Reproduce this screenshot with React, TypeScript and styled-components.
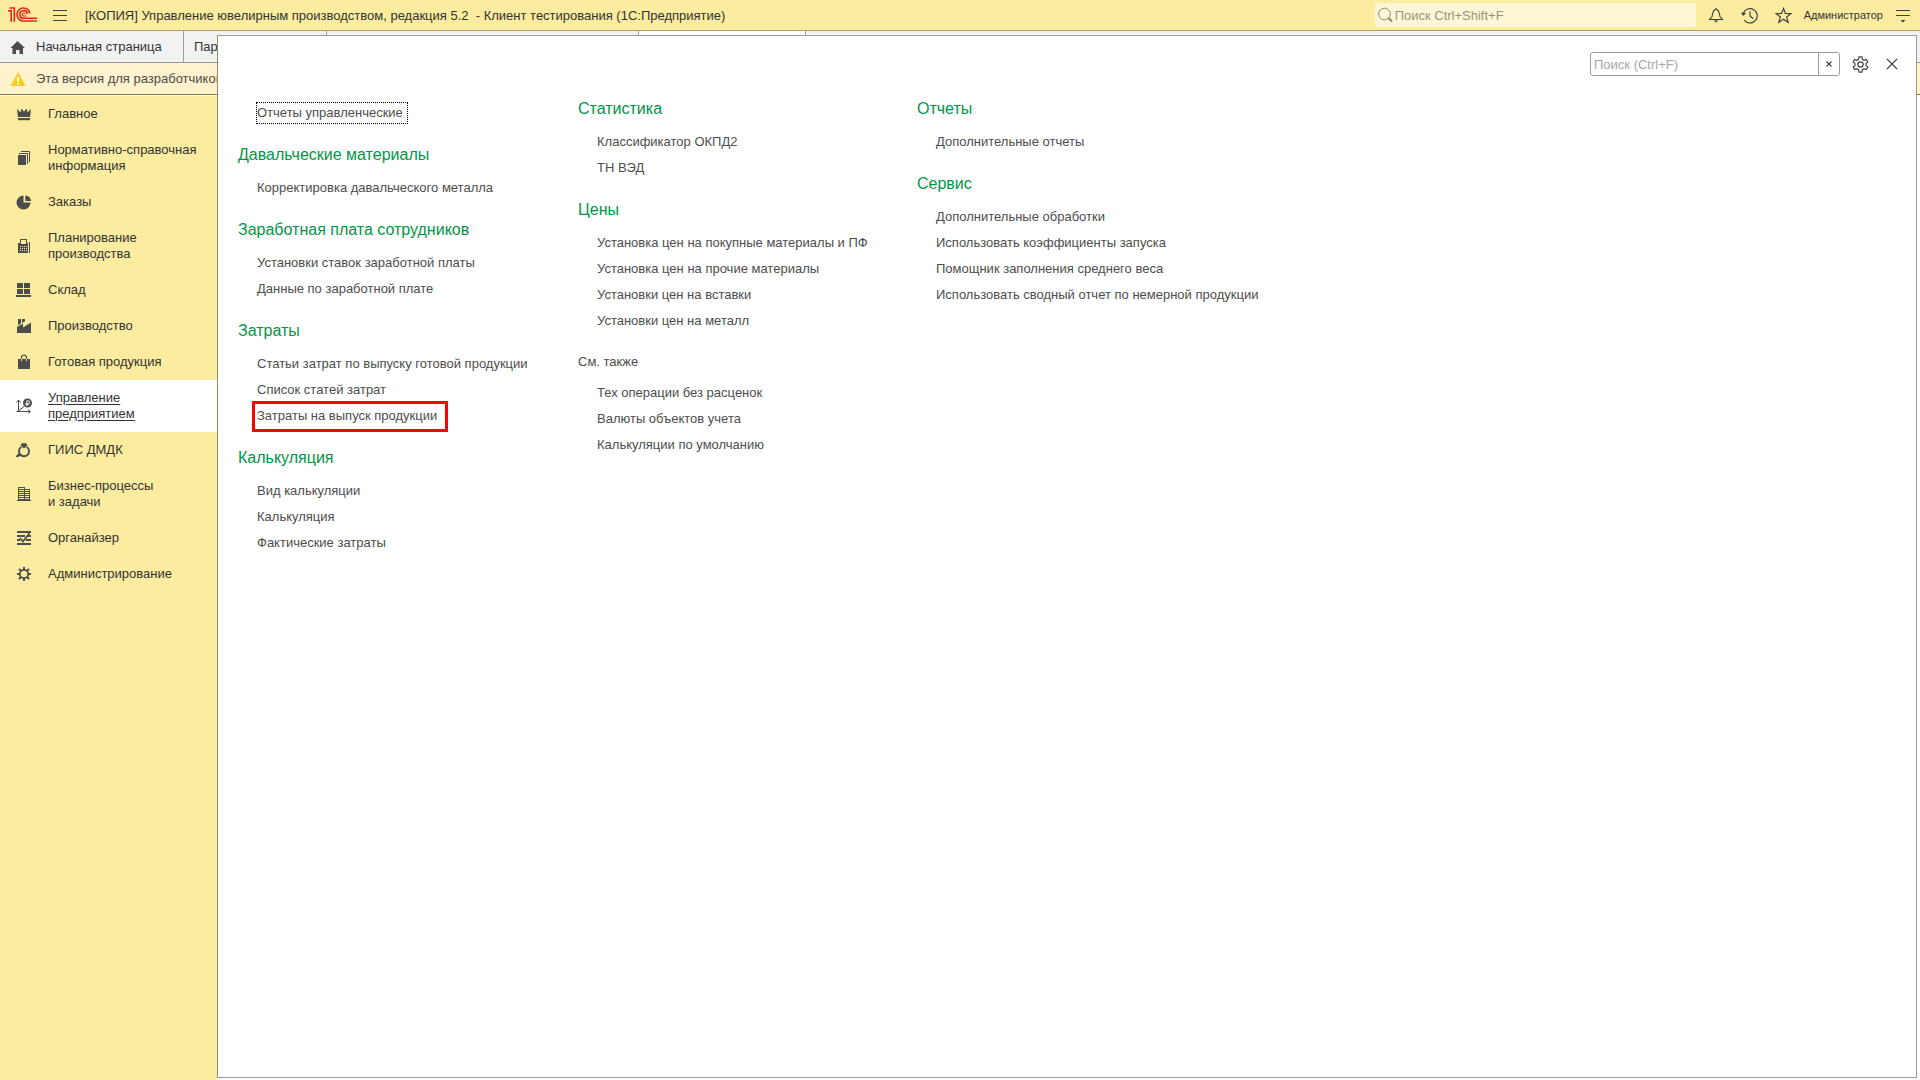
import React from "react";
import styled, { createGlobalStyle, css } from "styled-components";

const color = {
  brand: "#fbec9f",
  brandSoft: "#fdf7d8",
  notice: "#fff2cc",
  noticeLine: "#94792a",
  bar: "#f2f2f2",
  line: "#9b9b9b",
  brandLine: "#a8a16c",
  text: "#333333",
  link: "#4d4d4d",
  green: "#009646",
  mark: "#ff0000",
};

const Global = createGlobalStyle`
  *, *::before, *::after { box-sizing: border-box; }
  body { margin: 0; background: #fff; }
  body, button, input { font-family: "Liberation Sans", Arial, sans-serif; font-size: 13px; color: ${color.text}; }
  button { border: 0; background: none; padding: 0; cursor: pointer; }
  ul, h1, h2 { margin: 0; padding: 0; list-style: none; font-weight: 400; }
  a { color: inherit; text-decoration: none; }
  svg { display: block; flex: none; }
`;

const Page = styled.div`
  display: flex;
  flex-direction: column;
  height: 100vh;
  overflow: hidden;
`;

/* ---------- Title bar ---------- */

const TitleBar = styled.header`
  display: flex;
  align-items: center;
  flex: none;
  height: 31px;
  padding-left: 8px;
  background: ${color.brand};
  border-bottom: 1px solid ${color.brandLine};
`;

const MenuButton = styled.button`
  display: grid;
  place-items: center;
  width: 30px;
  height: 30px;
  margin: 0 10px 0 7px;
`;

const AppTitle = styled.h1`
  flex: 1;
  padding-top: 1px;
  font-size: 13px;
  line-height: 16px;
  white-space: pre;
`;

const GlobalSearch = styled.label`
  display: flex;
  align-items: center;
  gap: 2px;
  width: 321px;
  height: 24px;
  margin-right: 3px;
  padding-left: 3px;
  border-radius: 2px;
  background: ${color.brandSoft};
`;

const SearchInput = styled.input<{ $hint: string }>`
  flex: 1;
  min-width: 0;
  height: 22px;
  padding: 0;
  border: 0;
  outline: 0;
  background: transparent;
  &::placeholder {
    color: ${(p) => p.$hint};
    opacity: 1;
  }
`;

const IconButton = styled.button<{ $width: number }>`
  display: grid;
  place-items: center;
  width: ${(p) => p.$width}px;
  height: 24px;
`;

const UserButton = styled.button`
  padding: 0 3px;
  font-size: 11px;
  line-height: 16px;
`;

/* ---------- Tabs and notice ---------- */

const Workspace = styled.div`
  position: relative;
  display: flex;
  flex-direction: column;
  flex: 1;
  min-height: 0;
`;

const TabBar = styled.nav`
  display: flex;
  flex: none;
  height: 32px;
  background: ${color.bar};
  border-bottom: 1px solid ${color.line};
`;

const Tab = styled.button<{ $width: number; $active?: boolean }>`
  display: flex;
  align-items: center;
  gap: 10px;
  width: ${(p) => p.$width}px;
  padding: 0 10px;
  border-right: 1px solid ${color.line};
  background: ${(p) => (p.$active ? "#fff" : "transparent")};
`;

const Notice = styled.div`
  display: flex;
  align-items: center;
  flex: none;
  gap: 10px;
  height: 32px;
  padding: 0 10px;
  background: ${color.notice};
  border-bottom: 1px solid ${color.noticeLine};
  color: ${color.link};
`;

/* ---------- Sections ---------- */

const Sections = styled.nav`
  flex: 1;
  width: 217px;
  border-top: 1px solid #fffbe6;
  background: ${color.brand};
`;

const SectionLink = styled.a<{ $active?: boolean }>`
  display: flex;
  align-items: center;
  gap: 16px;
  padding: 10px 8px 10px 16px;
  line-height: 16px;
  white-space: pre-line;
  ${(p) =>
    p.$active &&
    css`
      background: #fff;
      text-decoration: underline;
      text-underline-offset: 2px;
    `}
`;

/* ---------- Command panel ---------- */

const Panel = styled.main`
  position: absolute;
  top: 4px;
  right: 3px;
  bottom: 2px;
  left: 217px;
  background: #fff;
  border: 1px solid ${color.line};
  border-left-color: #8f8c66;
`;

const PanelTools = styled.div`
  display: flex;
  justify-content: flex-end;
  align-items: center;
  padding: 16px 8px 0 20px;
`;

const PanelSearch = styled.div`
  display: flex;
  width: 250px;
  height: 24px;
  margin-right: 4px;
  padding-left: 3px;
  border: 1px solid ${color.line};
  border-radius: 3px;
`;

const ClearButton = styled.button`
  display: grid;
  place-items: center;
  width: 21px;
  border-left: 1px solid ${color.line};
`;

const Columns = styled.div`
  display: grid;
  grid-template-columns: 340px 339px auto;
  justify-content: start;
  padding: 4px 20px 20px;
`;

const Column = styled.div<{ $indent?: boolean }>`
  padding-top: ${(p) => (p.$indent ? 20 : 0)}px;
`;

const GroupTitle = styled.h2<{ $minor?: boolean }>`
  padding: ${(p) => (p.$minor ? "15px 0 5px" : "16px 0 7px")};
  font-size: ${(p) => (p.$minor ? 13 : 16)}px;
  line-height: 26px;
  color: ${(p) => (p.$minor ? color.link : color.green)};
`;

const Commands = styled.ul`
  padding-left: 18px;
`;

const CommandRow = styled.li`
  display: flex;
  align-items: center;
  height: 26px;
`;

const CommandLink = styled.a<{ $focused?: boolean; $marked?: boolean }>`
  position: relative;
  padding-right: 4px;
  border: 1px dotted ${(p) => (p.$focused ? "#000" : "transparent")};
  line-height: 20px;
  white-space: nowrap;
  color: ${color.link};
  ${(p) =>
    p.$marked &&
    css`
      &::after {
        content: "";
        position: absolute;
        inset: -5px -7px -6px -5px;
        border: 3px solid ${color.mark};
      }
    `}
`;

/* ---------- Icons ---------- */

type IconProps = { children: React.ReactNode; size?: number };

const Solid = ({ children, size = 16 }: IconProps) => (
  <svg width={size} height={size} viewBox="0 0 16 16" fill="#4d4d4d" aria-hidden="true">
    {children}
  </svg>
);

const Outline = ({ children, size = 16 }: IconProps) => (
  <svg width={size} height={size} viewBox="0 0 16 16" fill="none" stroke="#404040" strokeWidth="1.1" aria-hidden="true">
    {children}
  </svg>
);

const Logo = () => (
  <svg width="30" height="16" viewBox="0 0 30 16" fill="none" stroke="#e0251b" strokeWidth="1.6" aria-label="1С">
    <path d="M0 3.700H3.200V14.800M1.600 1H6.300V14.800" />
    <path d="M22 6.600A6.500 6.500 0 1 0 15.800 14H29" />
    <path d="M19.400 6.800A3.800 3.800 0 1 0 15.800 11.300H29" />
    <path d="M17.200 7.300A1.500 1.500 0 1 0 15.800 9H18.500" strokeWidth="1.100" />
  </svg>
);

const CrownIcon = () => (
  <Solid>
    <path d="M1 3l3.400 3.200L5.600 2.600 8 5.800l2.400-3.200 1.200 3.600L15 3l-.9 8H1.900zM2 12h12v2.200H2z" />
  </Solid>
);
const CopiesIcon = () => (
  <Solid>
    <path d="M2 5h8v10H2z" />
    <path d="M3 3.500h8.500V14M5 1.500h8.500V12" fill="none" stroke="#4d4d4d" />
  </Solid>
);
const PieIcon = () => (
  <Solid>
    <path d="M7.500 1.600V8.500h7A7 7 0 1 1 7.500 1.600z" />
    <path d="M9.300 1.400A6.200 6.200 0 0 1 15 6.900H9.300z" />
  </Solid>
);
const CalculatorIcon = () => (
  <Solid>
    <path d="M4 1h7v4h1v10H2V5h2zM5 2v4h5V2zM4 8v1h1V8zm2 0v1h1V8zm2 0v1h1V8zm2 0v1h1V8zM4 10v1h1v-1zm2 0v1h1v-1zm2 0v1h1v-1zm2 0v1h1v-1zM4 12v1h1v-1zm2 0v1h1v-1zm2 0v1h1v-1zm2 0v1h1v-1z" fillRule="evenodd" />
    <path d="M13 4h1v11h-1z" />
  </Solid>
);
const WarehouseIcon = () => (
  <Solid>
    <path d="M1 1h6v5H1zM8 1h6v5H8zM1 7h6v5H1zM8 7h6v5H8zM0 13h15v2H0z" />
  </Solid>
);
const FactoryIcon = () => (
  <Solid>
    <path d="M1 15V9L7 5.500V9.500L15 4.500V15z" />
    <path d="M2 1h3v4.500L2 7.300zM6 1h3v2.200L6 5z" />
  </Solid>
);
const BagIcon = () => (
  <Solid>
    <path d="M2 5h12v10H2z" />
    <path d="M5.500 5V3.500a2.500 2.500 0 0 1 5 0V5" fill="none" stroke="#4d4d4d" strokeWidth="1.200" />
    <path d="M5.500 5v2M10.500 5v2" stroke="#fbec9f" />
  </Solid>
);
const ChartCoinIcon = () => (
  <Solid>
    <path d="M2.500 13.500V2.500M.5 4.500l2-2.500 2 2.500M.5 13.500H14M12 11.500l2.500 2-2.500 2M3 12.500l5-4" fill="none" stroke="#4d4d4d" />
    <circle cx="11.500" cy="5" r="4.500" />
    <path d="M10.800 7.800V2.800h1.500a1.400 1.400 0 0 1 0 2.800H9.500M9.500 6.800h3.500" fill="none" stroke="#fff" strokeWidth=".9" />
  </Solid>
);
const RingIcon = () => (
  <Solid>
    <circle cx="8" cy="9.200" r="5" fill="none" stroke="#4d4d4d" strokeWidth="1.900" />
    <path d="M4 3L6 .8h4L12 3 8 7z" stroke="#fbec9f" strokeWidth=".8" />
    <path d="M0 14l3-3 2 2-2.500 2H0z" />
  </Solid>
);
const BuildingIcon = () => (
  <Solid>
    <path d="M2 1h7v13H2zM3 2v1h5V2zm0 2v1h5V4zm0 2v1h5V6zm0 2v1h5V8zm0 2v1h5v-1zm0 2v1h5v-1zM9 3h5v11H9zM9 4v1h4V4zm0 2v1h4V6zm0 2v1h4V8zm0 2v1h4v-1zm0 2v1h4v-1z" fillRule="evenodd" />
    <path d="M1 14h14v1H1z" />
  </Solid>
);
const OrganizerIcon = () => (
  <Solid>
    <path d="M1 1h14v2H1zM1 5h8v2H1zM12 5h3v2h-3zM1 9h3v2H1zM10 9h5v2h-5zM1 13h14v2H1z" />
    <path d="M4 8l3 3.500L13.500 3" fill="none" stroke="#4d4d4d" strokeWidth="1.800" />
  </Solid>
);
const CogIcon = () => (
  <Solid>
    <circle cx="8" cy="8" r="4.200" fill="none" stroke="#4d4d4d" strokeWidth="1.800" />
    <path d="M8 1v3M8 12v3M1 8h3M12 8h3M3 3l2.200 2.200M10.800 10.800L13 13M13 3l-2.200 2.200M5.200 10.800L3 13" stroke="#4d4d4d" strokeWidth="2" />
  </Solid>
);
const HomeIcon = () => (
  <Solid>
    <path d="M7.500 2l7.500 7h-2v6H9.500v-4h-3.500v4H2.500V9H.5z" />
  </Solid>
);
const WarningIcon = () => (
  <Solid>
    <path d="M8 1l7.500 14H.5z" fill="#fccb1f" />
    <path d="M7 6h2v5H7zM7 12h2v1.600H7z" fill="#fff" />
  </Solid>
);
const BurgerIcon = () => (
  <Outline>
    <path d="M1 3.500h14M1 8.500h14M1 13.500h14" />
  </Outline>
);
const SearchIcon = () => (
  <svg width="15" height="16" viewBox="0 0 15 16" fill="none" stroke="#8d8970" aria-hidden="true">
    <circle cx="6.500" cy="7" r="5.800" />
    <path d="M10.500 11l3.500 3.500" strokeWidth="2" />
  </svg>
);
const BellIcon = () => (
  <Outline>
    <path d="M1.500 12.500h13L12 9.500 11 5.500C10.500 3 9.500 2.500 8 2.500S5.500 3 5 5.500L4 9.500zM8 1v1.500" />
    <path d="M5.500 13.500h5L8 15.500z" fill="#404040" stroke="none" />
  </Outline>
);
const HistoryIcon = () => (
  <Outline size={17}>
    <path d="M2.100 6A6.800 6.800 0 1 1 3 12.300M8.500 4v4.500l3 2.500" />
    <path d="M0 5.500h5L2 8.500z" fill="#404040" stroke="none" />
  </Outline>
);
const StarIcon = () => (
  <Outline size={17}>
    <path d="M8 1.300l1.800 4.800 5.200.1-4.100 3.200 1.500 5L8 11.500l-4.400 2.900 1.500-5L1 6.200l5.200-.1z" />
  </Outline>
);
const ServiceIcon = () => (
  <Outline>
    <path d="M1 3.500h14M1 8.500h14" />
    <path d="M5.500 13h5L8 15.500z" fill="#404040" stroke="none" />
  </Outline>
);
const SettingsIcon = () => (
  <Outline size={17}>
    <circle cx="8" cy="8" r="2.500" />
    <path d="M6.600 .9h2.800l.4 2.200 1.600.9 2.100-.8 1.400 2.400-1.700 1.400v2l1.700 1.400-1.400 2.400-2.100-.8-1.600.9-.4 2.200H6.600l-.4-2.200-1.600-.9-2.100.8-1.400-2.400L2.800 9V7L1.100 5.600l1.400-2.400 2.100.8 1.600-.9z" />
  </Outline>
);
const CloseIcon = ({ size = 16 }: { size?: number }) => (
  <Outline size={size}>
    <path d="M3 3l10 10M13 3L3 13" strokeWidth={size < 12 ? 2.2 : 1.1} />
  </Outline>
);

/* ---------- Data ---------- */

const sections = [
  { label: "Главное", icon: <CrownIcon /> },
  { label: "Нормативно-справочная\nинформация", icon: <CopiesIcon /> },
  { label: "Заказы", icon: <PieIcon /> },
  { label: "Планирование\nпроизводства", icon: <CalculatorIcon /> },
  { label: "Склад", icon: <WarehouseIcon /> },
  { label: "Производство", icon: <FactoryIcon /> },
  { label: "Готовая продукция", icon: <BagIcon /> },
  { label: "Управление\nпредприятием", icon: <ChartCoinIcon />, active: true },
  { label: "ГИИС ДМДК", icon: <RingIcon /> },
  { label: "Бизнес-процессы\nи задачи", icon: <BuildingIcon /> },
  { label: "Органайзер", icon: <OrganizerIcon /> },
  { label: "Администрирование", icon: <CogIcon /> },
];

type Group = { title?: string; minor?: boolean; items: string[] };

const focusedCommand = "Отчеты управленческие";
const markedCommand = "Затраты на выпуск продукции";

const columns: Group[][] = [
  [
    { items: ["Отчеты управленческие"] },
    { title: "Давальческие материалы", items: ["Корректировка давальческого металла"] },
    { title: "Заработная плата сотрудников", items: ["Установки ставок заработной платы", "Данные по заработной плате"] },
    {
      title: "Затраты",
      items: ["Статьи затрат по выпуску готовой продукции", "Список статей затрат", "Затраты на выпуск продукции"],
    },
    { title: "Калькуляция", items: ["Вид калькуляции", "Калькуляция", "Фактические затраты"] },
  ],
  [
    { title: "Статистика", items: ["Классификатор ОКПД2", "ТН ВЭД"] },
    {
      title: "Цены",
      items: [
        "Установка цен на покупные материалы и ПФ",
        "Установка цен на прочие материалы",
        "Установки цен на вставки",
        "Установки цен на металл",
      ],
    },
    {
      title: "См. также",
      minor: true,
      items: ["Тех операции без расценок", "Валюты объектов учета", "Калькуляции по умолчанию"],
    },
  ],
  [
    { title: "Отчеты", items: ["Дополнительные отчеты"] },
    {
      title: "Сервис",
      items: [
        "Дополнительные обработки",
        "Использовать коэффициенты запуска",
        "Помощник заполнения среднего веса",
        "Использовать сводный отчет по немерной продукции",
      ],
    },
  ],
];

export default function App() {
  return (
    <Page>
      <Global />
      <TitleBar>
        <Logo />
        <MenuButton aria-label="Главное меню">
          <BurgerIcon />
        </MenuButton>
        <AppTitle>{"[КОПИЯ] Управление ювелирным производством, редакция 5.2  - Клиент тестирования (1С:Предприятие)"}</AppTitle>
        <GlobalSearch>
          <SearchIcon />
          <SearchInput $hint="#99957c" type="text" placeholder="Поиск Ctrl+Shift+F" aria-label="Глобальный поиск" />
        </GlobalSearch>
        <IconButton $width={34} aria-label="Уведомления">
          <BellIcon />
        </IconButton>
        <IconButton $width={34} aria-label="История">
          <HistoryIcon />
        </IconButton>
        <IconButton $width={34} aria-label="Избранное">
          <StarIcon />
        </IconButton>
        <UserButton>Администратор</UserButton>
        <IconButton $width={34} aria-label="Сервис и настройки">
          <ServiceIcon />
        </IconButton>
      </TitleBar>

      <Workspace>
        <TabBar>
          <Tab $width={184}>
            <HomeIcon />
            Начальная страница
          </Tab>
          <Tab $width={143}>Параметры</Tab>
          <Tab $width={312} aria-label="Вкладка 2" />
          <Tab $width={167} $active aria-label="Вкладка 3" />
        </TabBar>
        <Notice>
          <WarningIcon />
          Эта версия для разработчиков
        </Notice>
        <Sections>
          {sections.map((s) => (
            <SectionLink key={s.label} href="#" $active={s.active}>
              {s.icon}
              {s.label}
            </SectionLink>
          ))}
        </Sections>

        <Panel>
          <PanelTools>
            <PanelSearch>
              <SearchInput $hint="#a6a6a6" type="text" placeholder="Поиск (Ctrl+F)" aria-label="Поиск команды" />
              <ClearButton aria-label="Очистить">
                <CloseIcon size={8} />
              </ClearButton>
            </PanelSearch>
            <IconButton $width={32} aria-label="Настройка">
              <SettingsIcon />
            </IconButton>
            <IconButton $width={32} aria-label="Закрыть">
              <CloseIcon />
            </IconButton>
          </PanelTools>
          <Columns>
            {columns.map((groups, i) => (
              <Column key={i} $indent={!groups[0].title}>
                {groups.map((g, j) => (
                  <section key={j}>
                    {g.title && <GroupTitle $minor={g.minor}>{g.title}</GroupTitle>}
                    <Commands>
                      {g.items.map((item) => (
                        <CommandRow key={item}>
                          <CommandLink href="#" $focused={item === focusedCommand} $marked={item === markedCommand}>
                            {item}
                          </CommandLink>
                        </CommandRow>
                      ))}
                    </Commands>
                  </section>
                ))}
              </Column>
            ))}
          </Columns>
        </Panel>
      </Workspace>
    </Page>
  );
}
